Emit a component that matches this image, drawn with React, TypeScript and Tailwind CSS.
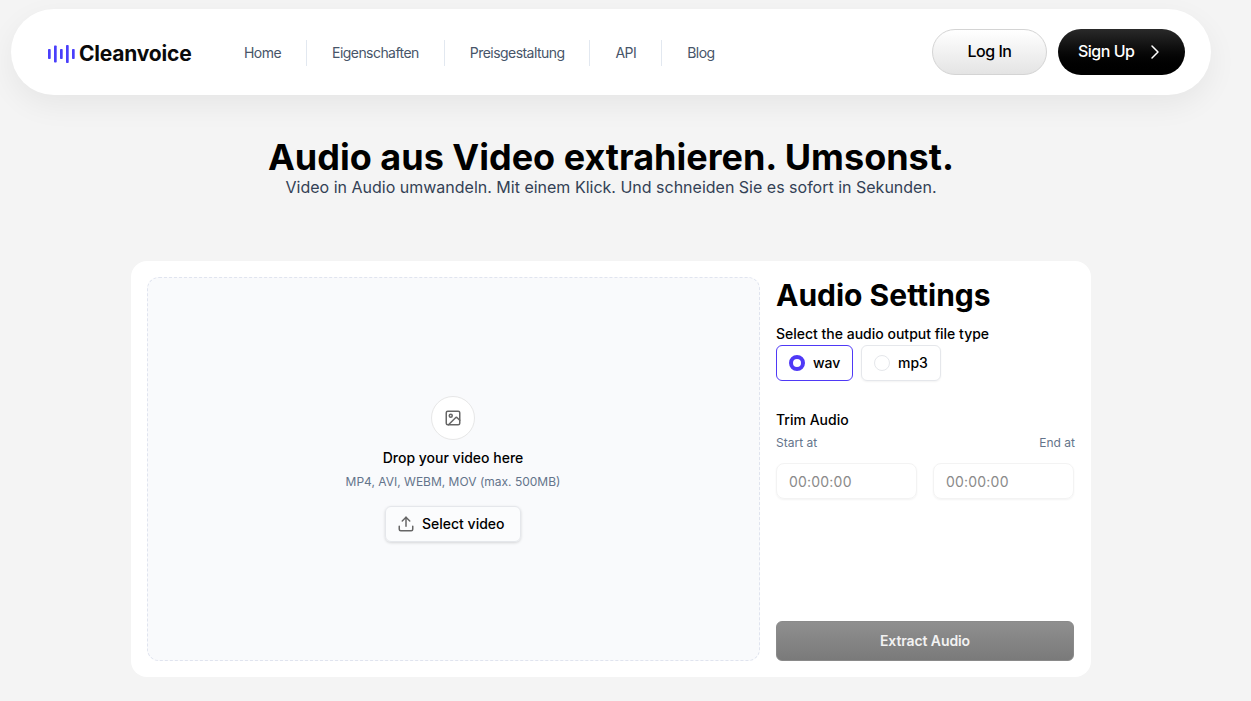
import { ChevronRight, ImageIcon, Upload } from 'lucide-react';

const navLinks = ['Home', 'Eigenschaften', 'Preisgestaltung', 'API', 'Blog'];

function Logo() {
  return (
    <div className="flex items-center gap-[4px] mt-[3px]">
      <svg width="27" height="20" viewBox="0 0 27 20" fill="#4a3ffb">
        <rect x="0" y="5" width="2.7" height="10" rx="0.8" />
        <rect x="6" y="1.5" width="2.7" height="17" rx="0.8" />
        <rect x="12" y="5" width="2.7" height="10" rx="0.8" />
        <rect x="18" y="1" width="2.7" height="18" rx="0.8" />
        <rect x="24" y="5" width="2.7" height="10" rx="0.8" />
      </svg>
      <span className="text-[21px] font-bold tracking-[-0.2px] leading-none text-[#0a0a0a]">Cleanvoice</span>
    </div>
  );
}

export default function App() {
  return (
    <div className="min-h-screen bg-[#f4f4f4] font-['Inter',sans-serif] pt-[9px] pl-[11px] pb-[24px]">
      <div className="w-[1200px] flex flex-col items-center">
        {/* Navbar */}
        <nav className="w-full h-[86px] bg-white rounded-[43px] shadow-[0_10px_30px_rgba(0,0,0,0.06)] flex items-center pl-[37px] pr-[26px]">
          <Logo />
          <div className="flex items-center ml-[52.5px] mt-[2px]">
            {navLinks.map((link, i) => (
              <div key={link} className="flex items-center">
                {i > 0 && <div className="w-px h-[26px] bg-[#e2e8f0] mx-[25px]" />}
                <a className="text-sm tracking-[-0.55px] text-[#475569]">{link}</a>
              </div>
            ))}
          </div>
          <div className="ml-auto flex items-center gap-[11px]">
            <button className="w-[115px] h-[46px] pb-[2px] rounded-full border border-[#d4d4d4] bg-gradient-to-b from-white to-[#e4e4e4] text-base tracking-[-0.5px] font-medium text-black">
              Log In
            </button>
            <button className="w-[127px] h-[46px] pl-[20px] pb-[2px] rounded-full bg-gradient-to-b from-[#2a2a2a] to-black text-base tracking-[-0.5px] font-medium text-white flex items-center gap-[9px]">
              Sign Up
              <ChevronRight className="w-6 h-6 mt-[2px]" strokeWidth={1.5} />
            </button>
          </div>
        </nav>

        {/* Heading */}
        <h1 className="mt-[40px] text-4xl leading-[44px] font-bold text-black">Audio aus Video extrahieren. Umsonst.</h1>
        <p className="mt-[-4px] text-base leading-6 text-[#334155]">
          Video in Audio umwandeln. Mit einem Klick. Und schneiden Sie es sofort in Sekunden.
        </p>

        {/* Main card */}
        <div className="mt-[62px] w-[960px] h-[416px] bg-white rounded-2xl p-4 flex gap-4">
          <div className="w-[613px] pr-px border border-dashed border-[#e0e4ef] rounded-xl bg-[#f9fafc] flex flex-col items-center justify-center">
            <div className="w-11 h-11 rounded-full bg-white border border-[#e7e7e7] flex items-center justify-center">
              <ImageIcon className="w-[18px] h-[18px] text-[#666666]" />
            </div>
            <p className="mt-[8px] text-sm leading-5 font-medium text-black">Drop your video here</p>
            <p className="mt-[4px] text-xs leading-5 text-[#64748b]">MP4, AVI, WEBM, MOV (max. 500MB)</p>
            <button className="mt-[14px] w-[136px] h-9 pl-[11px] rounded-md bg-white/40 border border-[#e5e7eb] shadow-[0_1px_3px_rgba(0,0,0,0.15)] flex items-center gap-[7px] text-sm font-medium text-black">
              <Upload className="w-[18px] h-[18px] text-[#666666]" />
              Select video
            </button>
          </div>

          {/* Settings */}
          <div className="flex-1 flex flex-col">
            <h2 className="text-3xl leading-9 font-bold text-black">Audio Settings</h2>
            <p className="mt-[11px] text-sm leading-5 font-medium text-black">Select the audio output file type</p>
            <div className="mt-px flex gap-2">
              <label className="w-[77px] h-9 rounded-md border border-[#4f39f6] flex items-center pl-[12px] gap-2 text-sm font-medium text-black">
                <span className="w-4 h-4 rounded-full border-[4px] border-[#4f39f6] bg-white" />
                wav
              </label>
              <label className="w-[80px] h-9 rounded-md border border-[#e5e7eb] shadow-[0_1px_2px_rgba(0,0,0,0.05)] flex items-center pl-[12px] gap-2 text-sm font-medium text-black">
                <span className="w-4 h-4 rounded-full border border-[#e5e7eb] bg-white" />
                mp3
              </label>
            </div>
            <p className="mt-[29px] text-sm leading-5 font-medium text-black">Trim Audio</p>
            <div className="mt-[3px] flex justify-between text-xs leading-5 text-[#64748b]">
              <span>Start at</span>
              <span>End at</span>
            </div>
            <div className="mt-[10px] flex gap-4 pr-px">
              <input
                readOnly
                placeholder="00:00:00"
                className="w-[141px] h-9 rounded-lg border border-[#f3f3f3] shadow-[0_1px_2px_rgba(0,0,0,0.05)] px-3 text-sm tracking-[0.2px] placeholder:text-[#8a8a8a] outline-none"
              />
              <input
                readOnly
                placeholder="00:00:00"
                className="w-[141px] h-9 rounded-lg border border-[#f3f3f3] shadow-[0_1px_2px_rgba(0,0,0,0.05)] px-3 text-sm tracking-[0.2px] placeholder:text-[#8a8a8a] outline-none"
              />
            </div>
            <button className="mt-auto w-[298px] h-10 rounded-md border border-[#8a8a8a] bg-gradient-to-b from-[#8f8f8f] to-[#7a7a7a] text-sm tracking-[-0.1px] font-semibold text-[#f2f2f2]">
              Extract Audio
            </button>
          </div>
        </div>
      </div>
    </div>
  );
}
